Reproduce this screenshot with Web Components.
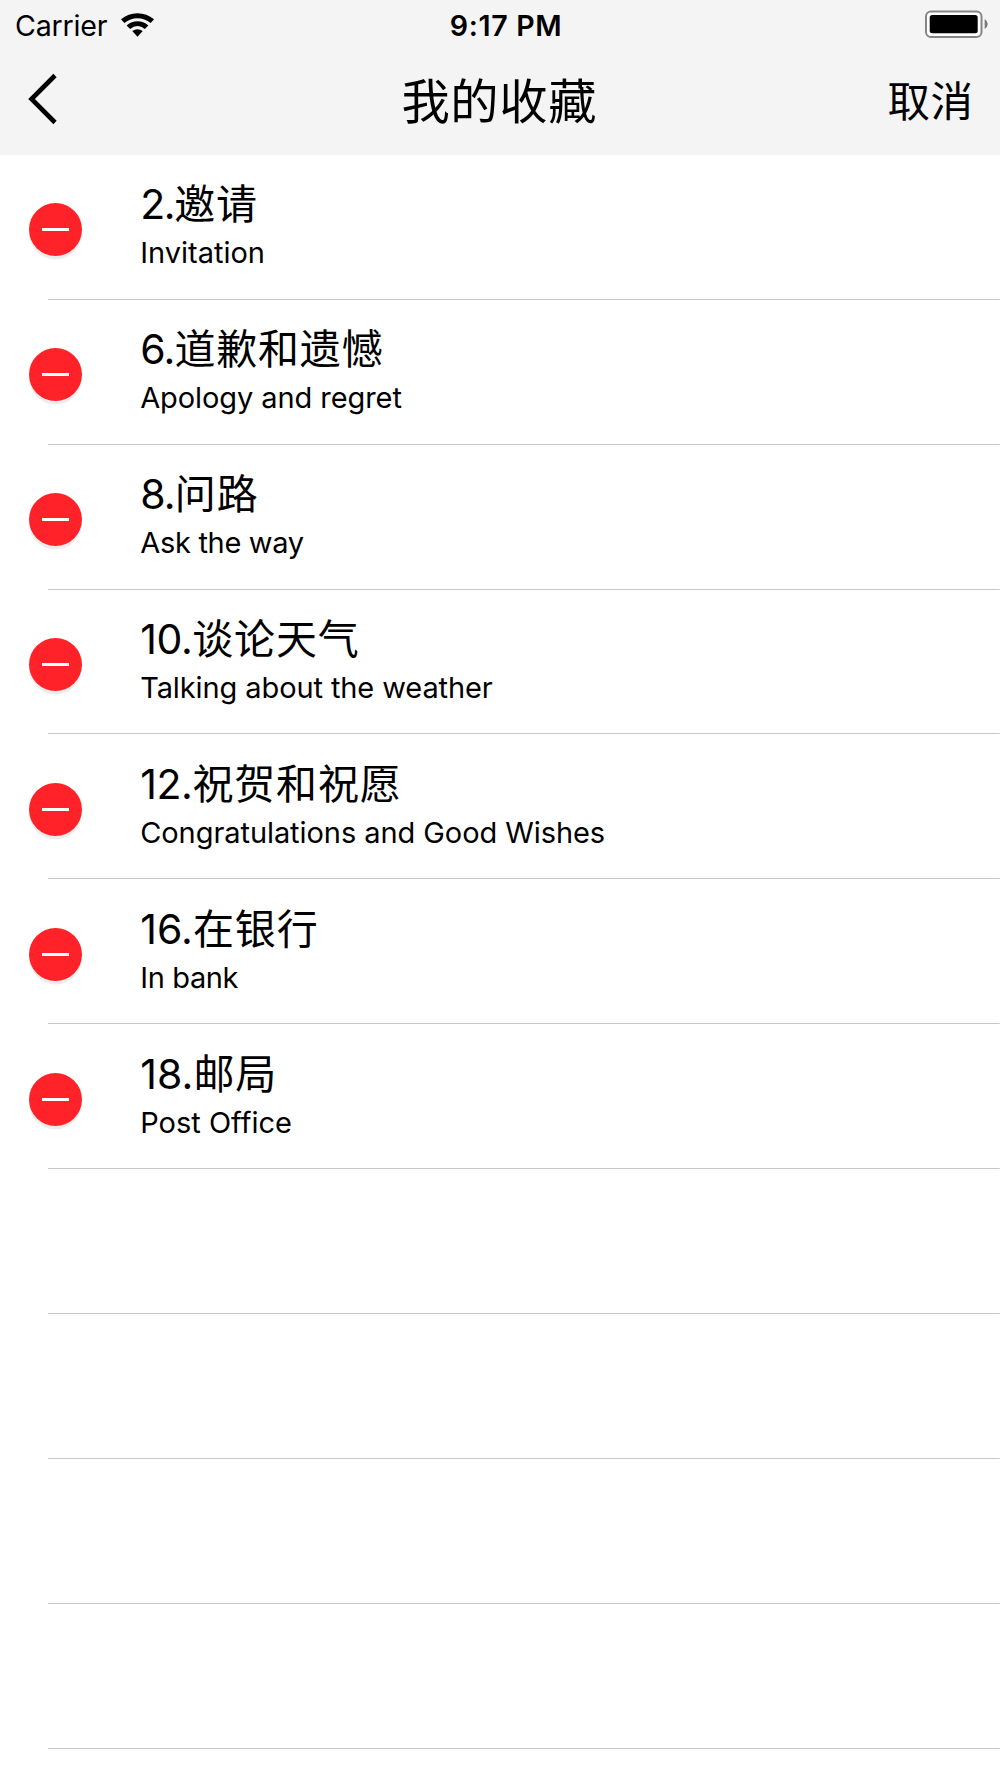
<!DOCTYPE html>
<html lang="zh-CN">
<head>
<meta charset="utf-8">
<title>我的收藏</title>
<style>
body{margin:0;background:#fff;color:#000;font-family:Inter,"Noto Sans CJK SC",sans-serif;overflow:hidden;height:1778px}
</style>
</head>
<body>
<favorites-page></favorites-page>
<script>
const define = (name, html) => customElements.define(name, class extends HTMLElement {
  constructor() {
    super();
    this.attachShadow({mode: 'open'}).innerHTML = html;
  }
});

define('status-bar', `
<style>
:host{display:grid;grid-template-columns:1fr auto 1fr;height:50px;font-size:28.6px}
.left{display:flex;padding-left:15px;letter-spacing:-.2px}
.left,.time{line-height:52px}
.wifi{margin:11.500px 0 0 13px;width:35px;height:26px}
.time{font-weight:600;letter-spacing:.65px;padding-left:12px}
.right{display:flex;justify-content:flex-end;padding-right:12px}
.battery{width:64px;height:30px;margin-top:9px}
svg{display:block}
</style>
<div class="left"><span>Carrier</span>
<svg class="wifi" viewBox="0 0 36 26" fill="#000"><path d="M1 7.2Q8.500 1 18 1T35 7.200L31.500 11Q25.500 6 18 6T4.500 11Z"/><path d="M6.800 13.400Q12 9.200 18 9.200T29.200 13.400L25.500 17Q22 14 18 14T10.500 17Z"/><path d="M12.600 19.300Q18 15.500 23.400 19.300L18 25.200Z"/></svg></div>
<span class="time">9:17 PM</span>
<div class="right"><svg class="battery" viewBox="0 0 64 30"><rect x="2" y="2.600" width="55.5" height="25.400" rx="5" fill="#fff" stroke="#858585" stroke-width="2"/><rect x="5.700" y="6" width="48" height="18.300" rx="2.500"/><path d="M60.700 10q3 2 3 5t-3 5z" fill="#777"/></svg></div>`);

define('nav-bar', `
<style>
:host{display:grid;grid-template-columns:1fr auto 1fr;height:105px;align-items:start}
svg{display:block;margin:20px 0 0 24px}
.title{font-size:48.3px;letter-spacing:.6px;line-height:60px;margin-top:22px;padding-right:1.500px;white-space:nowrap}
.action{font-size:42.500px;letter-spacing:.5px;line-height:60px;margin-top:22px;padding-right:26.500px;text-align:right}
</style>
<svg width="36" height="58" viewBox="0 0 36 58" fill="none" stroke="#000" stroke-width="4.600"><path d="M31 5.500L7.500 29L31 52.500"/></svg>
<div class="title"><slot name="title"></slot></div>
<div class="action"><slot name="action"></slot></div>`);

define('delete-button', `
<style>
:host{display:flex;width:53px;height:53px;border-radius:50%;background:#ff2228;align-items:center;justify-content:center;box-shadow:0 4px 1px -.5px #ececec}
i{display:block;width:27.500px;height:3px;background:#fff}
</style><i></i>`);

define('favorite-row', `
<style>
:host{display:flex;height:144.94px;box-sizing:border-box;padding-left:29px;background:linear-gradient(#c8c8cb,#c8c8cb) right bottom/calc(100% - 48.3px) 1.3px no-repeat}
delete-button{margin-top:48px}
.text{padding:24.1px 0 0 58.2px;white-space:nowrap}
.name{display:flex;font-size:41px;line-height:50px;height:50px}
.number{letter-spacing:var(--number-track,-.4px)}
.label{letter-spacing:.8px}
.sub{font-size:29px;line-height:40px;height:40px;margin-top:3.8px;letter-spacing:var(--track,0)}
</style>
<delete-button></delete-button>
<div class="text"><div class="name"><span class="number"><slot name="number"></slot></span><span class="label"><slot name="name"></slot></span></div><div class="sub"><slot></slot></div></div>`);

define('empty-row', `
<style>:host{display:block;height:144.94px;background:linear-gradient(#c8c8cb,#c8c8cb) right bottom/calc(100% - 48.3px) 1.3px no-repeat}</style>`);

define('favorites-page', `
<style>
:host{display:block}
header{display:block;background:#f4f4f4;height:155px}
main{display:flex;flex-direction:column}
</style>
<header><status-bar></status-bar><nav-bar><span slot="title">我的收藏</span><span slot="action">取消</span></nav-bar></header>
<main>
<favorite-row style="--number-track:-1.4px"><span slot="number">2.</span><span slot="name">邀请</span>Invitation</favorite-row>
<favorite-row style="--number-track:-.8px;--track:-.08px"><span slot="number">6.</span><span slot="name">道歉和遗憾</span>Apology and regret</favorite-row>
<favorite-row style="--number-track:-.8px;--track:-.3px"><span slot="number">8.</span><span slot="name">问路</span>Ask the way</favorite-row>
<favorite-row style="--track:-.1px"><span slot="number">10.</span><span slot="name">谈论天气</span>Talking about the weather</favorite-row>
<favorite-row style="--track:-.07px"><span slot="number">12.</span><span slot="name">祝贺和祝愿</span>Congratulations and Good Wishes</favorite-row>
<favorite-row style="--number-track:.1px;--track:-.35px"><span slot="number">16.</span><span slot="name">在银行</span>In bank</favorite-row>
<favorite-row style="--number-track:.1px"><span slot="number">18.</span><span slot="name">邮局</span>Post Office</favorite-row>
<empty-row></empty-row><empty-row></empty-row><empty-row></empty-row><empty-row></empty-row>
</main>`);
</script>
</body>
</html>
